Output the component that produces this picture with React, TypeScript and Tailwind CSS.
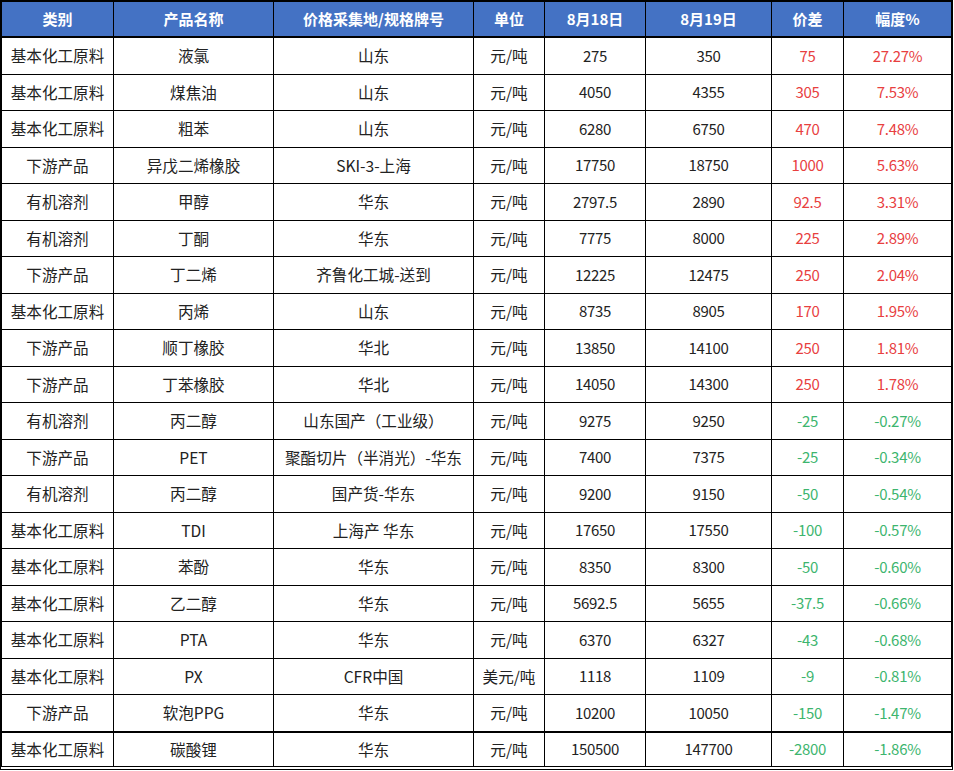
import React, { ReactElement } from "react";

type Row = [string, string, string, string, string, string, string, string];

const rows: Row[] = [
  ["基本化工原料", "液氯", "山东", "元/吨", "275", "350", "75", "27.27%"],
  ["基本化工原料", "煤焦油", "山东", "元/吨", "4050", "4355", "305", "7.53%"],
  ["基本化工原料", "粗苯", "山东", "元/吨", "6280", "6750", "470", "7.48%"],
  ["下游产品", "异戊二烯橡胶", "SKI-3-上海", "元/吨", "17750", "18750", "1000", "5.63%"],
  ["有机溶剂", "甲醇", "华东", "元/吨", "2797.5", "2890", "92.5", "3.31%"],
  ["有机溶剂", "丁酮", "华东", "元/吨", "7775", "8000", "225", "2.89%"],
  ["下游产品", "丁二烯", "齐鲁化工城-送到", "元/吨", "12225", "12475", "250", "2.04%"],
  ["基本化工原料", "丙烯", "山东", "元/吨", "8735", "8905", "170", "1.95%"],
  ["下游产品", "顺丁橡胶", "华北", "元/吨", "13850", "14100", "250", "1.81%"],
  ["下游产品", "丁苯橡胶", "华北", "元/吨", "14050", "14300", "250", "1.78%"],
  ["有机溶剂", "丙二醇", "山东国产（工业级）", "元/吨", "9275", "9250", "-25", "-0.27%"],
  ["下游产品", "PET", "聚酯切片（半消光）-华东", "元/吨", "7400", "7375", "-25", "-0.34%"],
  ["有机溶剂", "丙二醇", "国产货-华东", "元/吨", "9200", "9150", "-50", "-0.54%"],
  ["基本化工原料", "TDI", "上海产 华东", "元/吨", "17650", "17550", "-100", "-0.57%"],
  ["基本化工原料", "苯酚", "华东", "元/吨", "8350", "8300", "-50", "-0.60%"],
  ["基本化工原料", "乙二醇", "华东", "元/吨", "5692.5", "5655", "-37.5", "-0.66%"],
  ["基本化工原料", "PTA", "华东", "元/吨", "6370", "6327", "-43", "-0.68%"],
  ["基本化工原料", "PX", "CFR中国", "美元/吨", "1118", "1109", "-9", "-0.81%"],
  ["下游产品", "软泡PPG", "华东", "元/吨", "10200", "10050", "-150", "-1.47%"],
  ["基本化工原料", "碳酸锂", "华东", "元/吨", "150500", "147700", "-2800", "-1.86%"],
];

const headers = ["类别", "产品名称", "价格采集地/规格牌号", "单位", "8月18日", "8月19日", "价差", "幅度%"];

const cols = "grid grid-cols-[112px_160px_200px_71px_101px_126px_72px_107px]";

export default function App(): ReactElement {
  return (
    <div className="w-[954px] h-[771px] bg-white font-['Noto_Sans_CJK_SC','Noto_Sans',sans-serif]">
      <div className="w-[953px] border-x-2 border-t-2 border-b-4 border-double border-black">
        <div className={`${cols} h-[36px] bg-[#4472c4] border-b-2 border-black`}>
          {headers.map((h, i) => (
            <div
              key={h}
              className={`flex items-center justify-center text-[15px] font-bold text-white ${
                i < 7 ? "border-r border-black" : ""
              }`}
            >
              {h}
            </div>
          ))}
        </div>
        {rows.map((r, ri) => {
          const down = r[6].startsWith("-");
          const last = ri === rows.length - 1;
          return (
            <div
              key={ri}
              className={`${cols} ${
                last
                  ? "h-[35.5px] border-t-2 border-black"
                  : ri === rows.length - 2
                  ? "h-[35.5px]"
                  : "h-[36.5px] border-b border-black"
              }`}
            >
              {r.map((c, ci) => (
                <div
                  key={ci}
                  className={`flex items-center justify-center whitespace-nowrap ${
                    ci >= 4 ? "text-[15px] tracking-[-0.3px]" : "text-[15.6px]"
                  } ${ci < 7 ? "border-r border-black" : ""} ${
                    ci >= 6
                      ? down
                        ? "text-[#3db56e]"
                        : "text-[#e8403f]"
                      : "text-[#222]"
                  }`}
                >
                  {c}
                </div>
              ))}
            </div>
          );
        })}
      </div>
    </div>
  );
}
